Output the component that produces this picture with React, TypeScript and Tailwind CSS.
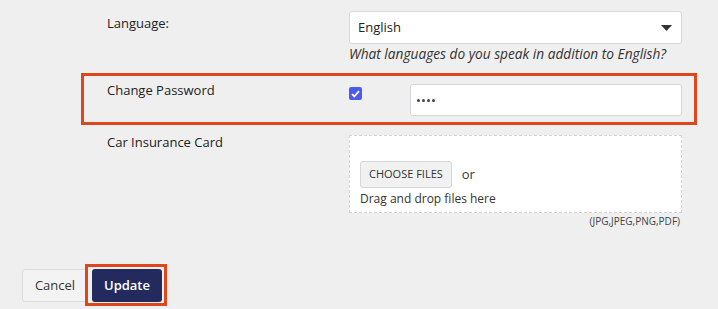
export default function App() {
  return (
    <div className="h-[309px] w-[718px] overflow-hidden bg-[#efefef] font-['Open_Sans',sans-serif] text-[13px] text-[#222]">
      <div className="ml-[81px] w-[616px] pt-[8px]">
        {/* Language */}
        <div className="flex border-[3px] border-transparent pl-[23px] pb-[7px]">
          <div className="w-[242px] pt-[3px] leading-[18px]">Language:</div>
          <div className="w-[333px]">
            <div className="flex h-[33px] items-center justify-between rounded-[3px] border border-[#d8d8dc] bg-white pl-[8px] pr-[9px]">
              <span>English</span>
              <svg width="11" height="6" viewBox="0 0 11 6">
                <path d="M0 0h11L5.5 6z" fill="#333" />
              </svg>
            </div>
            <div className="whitespace-nowrap pt-[1px] text-[13.7px] italic leading-[18px] text-[#333]">
              What languages do you speak in addition to English?
            </div>
          </div>
        </div>

        {/* Change Password */}
        <div className="flex h-[52px] border-[3px] border-[#e0461b] pl-[23px]">
          <div className="w-[242px] pt-[5px] leading-[18px]">Change Password</div>
          <div className="pt-[11px]">
            <div className="flex h-[13px] w-[13px] items-center justify-center rounded-[2px] bg-[#4b5bf0]">
              <svg width="9" height="8" viewBox="0 0 9 8">
                <path d="M1 4.2l2.3 2.3L8 1.2" fill="none" stroke="#fff" strokeWidth="1.8" />
              </svg>
            </div>
          </div>
          <div className="ml-[48px] pt-[8px]">
            <div className="flex h-[32px] w-[272px] items-center gap-[2px] rounded-[3px] border border-[#d8d8dc] bg-white pl-[6px]">
              <span className="h-[3px] w-[3px] rounded-full bg-[#444]" />
              <span className="h-[3px] w-[3px] rounded-full bg-[#444]" />
              <span className="h-[3px] w-[3px] rounded-full bg-[#444]" />
              <span className="h-[3px] w-[3px] rounded-full bg-[#444]" />
            </div>
          </div>
        </div>

        {/* Car Insurance Card */}
        <div className="flex border-[3px] border-transparent pl-[23px]">
          <div className="w-[242px] pt-[5px] leading-[18px]">Car Insurance Card</div>
          <div className="w-[333px] pt-[7px]">
            <div className="h-[78px] border border-dashed border-[#d4d4d4] bg-white pl-[10px] pt-[25px]">
              <div className="flex items-center">
                <button className="h-[27px] rounded-[3px] border border-[#d6d6d6] bg-[#f1f1f1] px-[8px] text-[11px] text-[#333]">
                  CHOOSE FILES
                </button>
                <span className="ml-[10px] text-[#333]">or</span>
              </div>
              <div className="pt-[1px] text-[12px] leading-[20px] text-[#333]">Drag and drop files here</div>
            </div>
            <div className="pr-[2px] pt-[1px] text-right text-[10px] leading-[14px] text-[#444]">(JPG,JPEG,PNG,PDF)</div>
          </div>
        </div>
      </div>

      {/* Buttons */}
      <div className="ml-[22px] mt-[33px] flex items-start">
        <button className="mt-[5px] h-[33px] w-[66px] rounded-[3px] border border-[#dcdcdc] bg-[#f3f3f3] text-[13px] text-[#333]">
          Cancel
        </button>
        <div className="ml-[-3px] border-[3px] border-[#e0461b] pb-[1px] pl-[4px] pr-[2px] pt-[2px]">
          <button className="h-[33px] w-[70px] rounded-[3px] bg-[#232b5e] text-[13px] font-semibold text-white">
            Update
          </button>
        </div>
      </div>
    </div>
  );
}
